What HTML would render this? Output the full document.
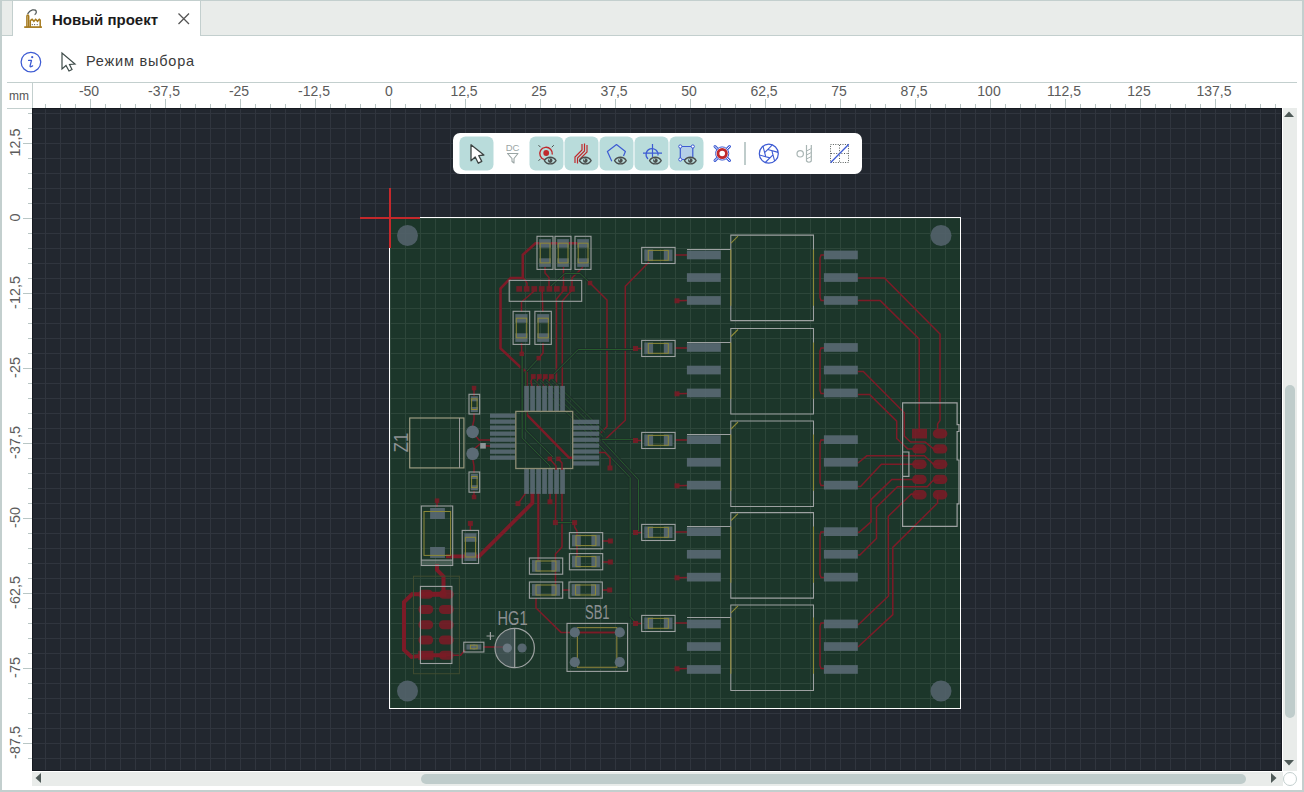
<!DOCTYPE html>
<html><head><meta charset="utf-8">
<style>
html,body{margin:0;padding:0;width:1304px;height:792px;overflow:hidden;background:#fff;font-family:"Liberation Sans",sans-serif;}
.abs{position:absolute;}
#frame{position:absolute;left:0;top:0;width:1304px;height:792px;}
</style></head><body>
<div id="frame">
<!-- outer borders -->
<div class="abs" style="left:0;top:0;width:2px;height:792px;background:#c3cfce"></div>
<div class="abs" style="left:0;top:0;width:1304px;height:1px;background:#c3cfce"></div>
<div class="abs" style="left:1302px;top:0;width:2px;height:792px;background:#c3cfce"></div>
<div class="abs" style="left:0;top:790px;width:1304px;height:2px;background:#c3cfce"></div>
<!-- tab bar -->
<div class="abs" style="left:2px;top:1px;width:1300px;height:34px;background:#e9ecea;border-bottom:1px solid #c3cfce"></div>
<div class="abs" style="left:12px;top:1px;width:187px;height:35px;background:#fff;border-left:1px solid #c3cfce;border-right:1px solid #c3cfce"></div>
<div class="abs" style="left:52px;top:11px;font-size:15px;font-weight:bold;color:#1b1b1b;white-space:nowrap">Новый проект</div>
<svg class="abs" style="left:0;top:0" width="220" height="36">
  <!-- factory icon -->
  <g fill="none" stroke="#a57a1e" stroke-width="1.5">
    <path d="M26.9 27 V16.2 Q26.9 15.1 27.8 15.1 Q28.7 15.1 28.7 16.2 V27"/>
    <path d="M30.3 27 V20.6 L32.1 19.3 L33.9 21.3 L35.7 19.3 L37.5 21.3 L39.3 19.3 L40.2 20.1 V27"/>
    <path d="M24.2 27.1 H41.9" stroke-width="1.7"/>
  </g>
  <path d="M27.6 13.8 Q29.5 10.6 32.5 9.9 Q36.3 9.3 36.3 12.2 Q36.1 14 34.6 14.6" fill="none" stroke="#505858" stroke-width="1.3"/>
  <g fill="#555"><circle cx="32.3" cy="24.6" r="0.6"/><circle cx="34.6" cy="24.6" r="0.6"/><circle cx="37.2" cy="24.6" r="0.6"/></g>
  <!-- close X -->
  <path d="M178.5 13.5 L189 24 M189 13.5 L178.5 24" stroke="#555" stroke-width="1.3"/>
</svg>
<!-- toolbar row -->
<svg class="abs" style="left:0;top:36px" width="90" height="46">
  <circle cx="30.9" cy="26.1" r="9.8" fill="none" stroke="#3d5bd3" stroke-width="1.25"/>
  <path d="M28.6 24.4 H31.5 L30.1 29.9 Q29.8 31 30.9 30.8 L32.6 29.9" fill="none" stroke="#3d5bd3" stroke-width="1.3" stroke-linejoin="round" stroke-linecap="round"/>
  <circle cx="32.2" cy="21.2" r="1.1" fill="#3d5bd3"/>
  <path d="M62 17 L62 33 L66 29.5 L69 35 L72 33.5 L69.5 28.5 L75 28 Z" fill="#fff" stroke="#3d4a48" stroke-width="1.2" stroke-linejoin="miter"/>
</svg>
<div class="abs" style="left:86px;top:53px;font-size:14.5px;letter-spacing:0.8px;color:#3a3a3a;white-space:nowrap">Режим выбора</div>
<div class="abs" style="left:7px;top:82px;width:1290px;height:1px;background:#c3cfce"></div>
<!-- ruler -->
<div id="rulers"><svg class="abs" style="left:0;top:0" width="1304" height="110">
<path d="M45.5 104 V108 M60.5 104 V108 M75.5 104 V108 M90.5 99 V108 M105.5 104 V108 M120.5 104 V108 M135.5 104 V108 M150.5 104 V108 M165.5 99 V108 M180.5 104 V108 M195.5 104 V108 M210.5 104 V108 M225.5 104 V108 M240.5 99 V108 M255.5 104 V108 M270.5 104 V108 M285.5 104 V108 M300.5 104 V108 M315.5 99 V108 M330.5 104 V108 M345.5 104 V108 M360.5 104 V108 M375.5 104 V108 M390.5 99 V108 M405.5 104 V108 M420.5 104 V108 M435.5 104 V108 M450.5 104 V108 M465.5 99 V108 M480.5 104 V108 M495.5 104 V108 M510.5 104 V108 M525.5 104 V108 M540.5 99 V108 M555.5 104 V108 M570.5 104 V108 M585.5 104 V108 M600.5 104 V108 M615.5 99 V108 M630.5 104 V108 M645.5 104 V108 M660.5 104 V108 M675.5 104 V108 M690.5 99 V108 M705.5 104 V108 M720.5 104 V108 M735.5 104 V108 M750.5 104 V108 M765.5 99 V108 M780.5 104 V108 M795.5 104 V108 M810.5 104 V108 M825.5 104 V108 M840.5 99 V108 M855.5 104 V108 M870.5 104 V108 M885.5 104 V108 M900.5 104 V108 M915.5 99 V108 M930.5 104 V108 M945.5 104 V108 M960.5 104 V108 M975.5 104 V108 M990.5 99 V108 M1005.5 104 V108 M1020.5 104 V108 M1035.5 104 V108 M1050.5 104 V108 M1065.5 99 V108 M1080.5 104 V108 M1095.5 104 V108 M1110.5 104 V108 M1125.5 104 V108 M1140.5 99 V108 M1155.5 104 V108 M1170.5 104 V108 M1185.5 104 V108 M1200.5 104 V108 M1215.5 99 V108 M1230.5 104 V108 M1245.5 104 V108 M1260.5 104 V108 M1275.5 104 V108" stroke="#b9c6c5" stroke-width="1"/>
<text x="89" y="96" text-anchor="middle" font-size="14" fill="#5b5b5b">-50</text>
<text x="164" y="96" text-anchor="middle" font-size="14" fill="#5b5b5b">-37,5</text>
<text x="239" y="96" text-anchor="middle" font-size="14" fill="#5b5b5b">-25</text>
<text x="314" y="96" text-anchor="middle" font-size="14" fill="#5b5b5b">-12,5</text>
<text x="389" y="96" text-anchor="middle" font-size="14" fill="#5b5b5b">0</text>
<text x="464" y="96" text-anchor="middle" font-size="14" fill="#5b5b5b">12,5</text>
<text x="539" y="96" text-anchor="middle" font-size="14" fill="#5b5b5b">25</text>
<text x="614" y="96" text-anchor="middle" font-size="14" fill="#5b5b5b">37,5</text>
<text x="689" y="96" text-anchor="middle" font-size="14" fill="#5b5b5b">50</text>
<text x="764" y="96" text-anchor="middle" font-size="14" fill="#5b5b5b">62,5</text>
<text x="839" y="96" text-anchor="middle" font-size="14" fill="#5b5b5b">75</text>
<text x="914" y="96" text-anchor="middle" font-size="14" fill="#5b5b5b">87,5</text>
<text x="989" y="96" text-anchor="middle" font-size="14" fill="#5b5b5b">100</text>
<text x="1064" y="96" text-anchor="middle" font-size="14" fill="#5b5b5b">112,5</text>
<text x="1139" y="96" text-anchor="middle" font-size="14" fill="#5b5b5b">125</text>
<text x="1214" y="96" text-anchor="middle" font-size="14" fill="#5b5b5b">137,5</text>
</svg>
<svg class="abs" style="left:0;top:108px" width="33" height="663">
<path d="M28 5.5 H32 M28 20.5 H32 M23 35.5 H32 M28 50.5 H32 M28 65.5 H32 M28 80.5 H32 M28 95.5 H32 M23 110.5 H32 M28 125.5 H32 M28 140.5 H32 M28 155.5 H32 M28 170.5 H32 M23 185.5 H32 M28 200.5 H32 M28 215.5 H32 M28 230.5 H32 M28 245.5 H32 M23 260.5 H32 M28 275.5 H32 M28 290.5 H32 M28 305.5 H32 M28 320.5 H32 M23 335.5 H32 M28 350.5 H32 M28 365.5 H32 M28 380.5 H32 M28 395.5 H32 M23 410.5 H32 M28 425.5 H32 M28 440.5 H32 M28 455.5 H32 M28 470.5 H32 M23 485.5 H32 M28 500.5 H32 M28 515.5 H32 M28 530.5 H32 M28 545.5 H32 M23 560.5 H32 M28 575.5 H32 M28 590.5 H32 M28 605.5 H32 M28 620.5 H32 M23 635.5 H32 M28 650.5 H32" stroke="#b9c6c5" stroke-width="1"/>
<text transform="translate(19.6 34.5) rotate(-90)" text-anchor="middle" font-size="14.4" fill="#5b5b5b">12,5</text>
<text transform="translate(19.6 109.5) rotate(-90)" text-anchor="middle" font-size="14.4" fill="#5b5b5b">0</text>
<text transform="translate(19.6 184.5) rotate(-90)" text-anchor="middle" font-size="14.4" fill="#5b5b5b">-12,5</text>
<text transform="translate(19.6 259.5) rotate(-90)" text-anchor="middle" font-size="14.4" fill="#5b5b5b">-25</text>
<text transform="translate(19.6 334.5) rotate(-90)" text-anchor="middle" font-size="14.4" fill="#5b5b5b">-37,5</text>
<text transform="translate(19.6 409.5) rotate(-90)" text-anchor="middle" font-size="14.4" fill="#5b5b5b">-50</text>
<text transform="translate(19.6 484.5) rotate(-90)" text-anchor="middle" font-size="14.4" fill="#5b5b5b">-62,5</text>
<text transform="translate(19.6 559.5) rotate(-90)" text-anchor="middle" font-size="14.4" fill="#5b5b5b">-75</text>
<text transform="translate(19.6 634.5) rotate(-90)" text-anchor="middle" font-size="14.4" fill="#5b5b5b">-87,5</text>
</svg></div>
<div class="abs" style="left:9px;top:89px;font-size:12px;color:#555">mm</div>
<div class="abs" style="left:32px;top:83px;width:1px;height:25px;background:#c3cfce"></div>
<div class="abs" style="left:7px;top:108px;width:25px;height:1px;background:#c3cfce"></div>
<!-- canvas -->
<svg class="abs" id="cv" style="left:0;top:0" width="1304" height="792">
  <defs>
    <pattern id="grid" x="45" y="113" width="15" height="15" patternUnits="userSpaceOnUse">
      <rect x="0" y="0" width="15" height="1" fill="#30353e"/>
      <rect x="0" y="0" width="1" height="15" fill="#30353e"/>
    </pattern>
    <pattern id="gridg" x="45" y="113" width="15" height="15" patternUnits="userSpaceOnUse">
      <rect x="0" y="0" width="15" height="1" fill="#2d463a"/>
      <rect x="0" y="0" width="1" height="15" fill="#2d463a"/>
    </pattern>
  </defs>
  <rect x="32" y="108" width="1250" height="663" fill="#22272f"/>
  <rect x="32" y="108" width="1250" height="663" fill="url(#grid)"/>
  <rect x="32" y="108" width="1250" height="1" fill="#151920"/>
  <rect x="32" y="108" width="1" height="663" fill="#151920"/>
  <rect x="1281" y="108" width="1" height="663" fill="#151920"/>
  <rect x="32" y="770" width="1250" height="1" fill="#151920"/>
  <!-- board -->
  <rect x="390" y="218" width="570" height="491" fill="#1c362a"/>
  <rect x="390" y="218" width="570" height="491" fill="url(#gridg)"/>
  <rect x="389.5" y="217.5" width="571" height="491" fill="none" stroke="#fff" stroke-width="1"/>
  <g fill="#56646e" fill-opacity="0.85">
    <circle cx="407.5" cy="235.5" r="10.5"/><circle cx="941" cy="235.5" r="10.5"/>
    <circle cx="407.5" cy="691" r="10.5"/><circle cx="941" cy="691" r="10.5"/>
  </g>
  <g id="pcb"><path d="M578.0 243.2 L535.5 243.2 L522.8 254.8 L522.8 278.0 L510.7 278.0 L500.5 288.6 L500.5 348.4 L526.5 372.8 L526.5 414.3 L569.1 457.8 L574.0 457.8" fill="none" stroke="#7c1b27" stroke-width="2.6" stroke-linejoin="miter"/>
<path d="M522.8 277.0 L527.0 283.0 L527.0 288.0" fill="none" stroke="#7c1b27" stroke-width="1.5" stroke-linejoin="miter"/>
<path d="M545.0 267.0 L545.0 273.0 L549.0 277.5 L549.0 288.0" fill="none" stroke="#7c1b27" stroke-width="1.5" stroke-linejoin="miter"/>
<path d="M563.5 267.0 L563.5 288.0" fill="none" stroke="#7c1b27" stroke-width="1.5" stroke-linejoin="miter"/>
<path d="M583.0 267.0 L572.0 278.0 L572.0 288.0" fill="none" stroke="#7c1b27" stroke-width="1.5" stroke-linejoin="miter"/>
<path d="M590.0 283.0 L607.0 300.0 L607.0 426.4 L599.8 434.0" fill="none" stroke="#7c1b27" stroke-width="1.5" stroke-linejoin="miter"/>
<path d="M534.2 291.0 L521.5 302.0 L521.5 312.0" fill="none" stroke="#7c1b27" stroke-width="1.5" stroke-linejoin="miter"/>
<path d="M542.2 290.0 L542.8 312.0" fill="none" stroke="#7c1b27" stroke-width="1.5" stroke-linejoin="miter"/>
<path d="M564.0 290.0 L556.5 299.0 L556.5 388.0" fill="none" stroke="#7c1b27" stroke-width="1.5" stroke-linejoin="miter"/>
<path d="M572.0 290.0 L562.3 301.0 L562.3 388.0" fill="none" stroke="#7c1b27" stroke-width="1.5" stroke-linejoin="miter"/>
<path d="M521.5 343.0 L521.8 353.9" fill="none" stroke="#7c1b27" stroke-width="1.5" stroke-linejoin="miter"/>
<path d="M543.0 343.0 L543.0 353.0 L538.8 358.2" fill="none" stroke="#7c1b27" stroke-width="1.5" stroke-linejoin="miter"/>
<path d="M649.0 262.0 L625.3 286.2 L625.3 420.2 L605.0 439.6 L599.0 439.6" fill="none" stroke="#7c1b27" stroke-width="1.5" stroke-linejoin="miter"/>
<path d="M533.3 376.5 L530.9 381.0 L532.4 388.0" fill="none" stroke="#7c1b27" stroke-width="1.5" stroke-linejoin="miter"/>
<path d="M539.3 376.5 L536.8 381.0 L538.3 388.0" fill="none" stroke="#7c1b27" stroke-width="1.5" stroke-linejoin="miter"/>
<path d="M545.3 376.5 L542.7 381.0 L544.2 388.0" fill="none" stroke="#7c1b27" stroke-width="1.5" stroke-linejoin="miter"/>
<path d="M551.4 376.5 L548.6 381.0 L550.1 388.0" fill="none" stroke="#7c1b27" stroke-width="1.5" stroke-linejoin="miter"/>
<path d="M474.0 388.0 L474.0 396.0" fill="none" stroke="#7c1b27" stroke-width="1.5" stroke-linejoin="miter"/>
<path d="M474.0 413.0 L474.0 420.0 L472.6 426.0" fill="none" stroke="#7c1b27" stroke-width="1.5" stroke-linejoin="miter"/>
<path d="M472.6 432.0 L479.0 440.0 L491.0 440.0" fill="none" stroke="#7c1b27" stroke-width="1.5" stroke-linejoin="miter"/>
<path d="M483.0 445.8 L491.0 445.9" fill="none" stroke="#7c1b27" stroke-width="1.5" stroke-linejoin="miter"/>
<path d="M474.0 449.0 L480.0 444.0" fill="none" stroke="#7c1b27" stroke-width="1.5" stroke-linejoin="miter"/>
<path d="M472.6 458.0 L474.0 466.0 L474.0 473.0" fill="none" stroke="#7c1b27" stroke-width="1.5" stroke-linejoin="miter"/>
<path d="M474.0 491.0 L474.0 497.0" fill="none" stroke="#7c1b27" stroke-width="1.5" stroke-linejoin="miter"/>
<path d="M532.4 492.0 L532.4 503.0 L479.0 556.3 L446.0 556.3" fill="none" stroke="#7c1b27" stroke-width="3.8" stroke-linejoin="miter"/>
<path d="M526.5 492.0 L518.0 503.6" fill="none" stroke="#7c1b27" stroke-width="1.5" stroke-linejoin="miter"/>
<path d="M538.3 492.0 L538.3 560.0" fill="none" stroke="#7c1b27" stroke-width="2.2" stroke-linejoin="miter"/>
<path d="M550.1 492.0 L550.0 501.8" fill="none" stroke="#7c1b27" stroke-width="1.5" stroke-linejoin="miter"/>
<path d="M556.0 492.0 L555.4 522.6" fill="none" stroke="#7c1b27" stroke-width="1.5" stroke-linejoin="miter"/>
<path d="M562.0 492.0 L562.0 547.0 L555.5 554.0 L555.5 590.0" fill="none" stroke="#7c1b27" stroke-width="1.5" stroke-linejoin="miter"/>
<path d="M574.6 522.6 L574.6 527.0 L577.0 531.0 L577.0 556.0" fill="none" stroke="#7c1b27" stroke-width="1.5" stroke-linejoin="miter"/>
<path d="M602.0 541.0 L610.4 541.0" fill="none" stroke="#7c1b27" stroke-width="1.5" stroke-linejoin="miter"/>
<path d="M602.0 562.0 L610.4 562.0" fill="none" stroke="#7c1b27" stroke-width="1.5" stroke-linejoin="miter"/>
<path d="M602.0 590.0 L609.7 590.0" fill="none" stroke="#7c1b27" stroke-width="1.5" stroke-linejoin="miter"/>
<path d="M562.0 590.0 L570.0 590.0" fill="none" stroke="#7c1b27" stroke-width="1.5" stroke-linejoin="miter"/>
<path d="M437.0 500.7 L437.0 507.0" fill="none" stroke="#7c1b27" stroke-width="1.5" stroke-linejoin="miter"/>
<path d="M470.4 523.4 L470.4 531.0" fill="none" stroke="#7c1b27" stroke-width="1.5" stroke-linejoin="miter"/>
<path d="M437.0 564.0 L437.0 570.0 L443.5 576.5 L443.5 594.3" fill="none" stroke="#7c1b27" stroke-width="4.0" stroke-linejoin="miter"/>
<path d="M425.8 594.3 L412.0 594.3 L404.0 602.0 L404.0 650.0 L411.5 657.0 L425.8 655.3" fill="none" stroke="#7c1b27" stroke-width="4.0" stroke-linejoin="miter"/>
<path d="M425.8 594.3 L446.3 594.3" fill="none" stroke="#7c1b27" stroke-width="5.0" stroke-linejoin="miter"/>
<path d="M425.8 655.3 L446.3 655.3" fill="none" stroke="#7c1b27" stroke-width="4.0" stroke-linejoin="miter"/>
<path d="M446.3 655.3 L460.6 655.3 L465.0 650.0" fill="none" stroke="#7c1b27" stroke-width="1.5" stroke-linejoin="miter"/>
<path d="M483.0 647.0 L503.0 647.0" fill="none" stroke="#7c1b27" stroke-width="1.5" stroke-linejoin="miter"/>
<path d="M536.0 598.0 L536.0 608.0 L561.0 632.4 L620.0 632.4" fill="none" stroke="#7c1b27" stroke-width="1.5" stroke-linejoin="miter"/>
<path d="M675.0 255.0 L687.0 255.0" fill="none" stroke="#7c1b27" stroke-width="1.5" stroke-linejoin="miter"/>
<path d="M677.0 300.8 L687.0 300.5" fill="none" stroke="#7c1b27" stroke-width="1.5" stroke-linejoin="miter"/>
<path d="M824.0 254.9 L821.0 254.9 L820.0 258.0 L820.0 297.5 L821.0 300.5 L824.0 300.5" fill="none" stroke="#7c1b27" stroke-width="1.5" stroke-linejoin="miter"/>
<path d="M675.0 348.0 L687.0 348.0" fill="none" stroke="#7c1b27" stroke-width="1.5" stroke-linejoin="miter"/>
<path d="M677.0 393.8 L687.0 393.5" fill="none" stroke="#7c1b27" stroke-width="1.5" stroke-linejoin="miter"/>
<path d="M635.5 348.5 L642.0 348.5" fill="none" stroke="#7c1b27" stroke-width="1.5" stroke-linejoin="miter"/>
<path d="M824.0 347.9 L821.0 347.9 L820.0 351.0 L820.0 390.5 L821.0 393.5 L824.0 393.5" fill="none" stroke="#7c1b27" stroke-width="1.5" stroke-linejoin="miter"/>
<path d="M675.0 440.0 L687.0 440.0" fill="none" stroke="#7c1b27" stroke-width="1.5" stroke-linejoin="miter"/>
<path d="M677.0 485.8 L687.0 485.5" fill="none" stroke="#7c1b27" stroke-width="1.5" stroke-linejoin="miter"/>
<path d="M635.5 440.5 L642.0 440.5" fill="none" stroke="#7c1b27" stroke-width="1.5" stroke-linejoin="miter"/>
<path d="M824.0 439.9 L821.0 439.9 L820.0 443.0 L820.0 482.5 L821.0 485.5 L824.0 485.5" fill="none" stroke="#7c1b27" stroke-width="1.5" stroke-linejoin="miter"/>
<path d="M675.0 532.0 L687.0 532.0" fill="none" stroke="#7c1b27" stroke-width="1.5" stroke-linejoin="miter"/>
<path d="M677.0 577.8 L687.0 577.5" fill="none" stroke="#7c1b27" stroke-width="1.5" stroke-linejoin="miter"/>
<path d="M635.5 532.5 L642.0 532.5" fill="none" stroke="#7c1b27" stroke-width="1.5" stroke-linejoin="miter"/>
<path d="M824.0 531.9 L821.0 531.9 L820.0 535.0 L820.0 574.5 L821.0 577.5 L824.0 577.5" fill="none" stroke="#7c1b27" stroke-width="1.5" stroke-linejoin="miter"/>
<path d="M675.0 623.0 L687.0 623.0" fill="none" stroke="#7c1b27" stroke-width="1.5" stroke-linejoin="miter"/>
<path d="M677.0 668.8 L687.0 668.5" fill="none" stroke="#7c1b27" stroke-width="1.5" stroke-linejoin="miter"/>
<path d="M635.5 623.5 L642.0 623.5" fill="none" stroke="#7c1b27" stroke-width="1.5" stroke-linejoin="miter"/>
<path d="M824.0 622.9 L821.0 622.9 L820.0 626.0 L820.0 665.5 L821.0 668.5 L824.0 668.5" fill="none" stroke="#7c1b27" stroke-width="1.5" stroke-linejoin="miter"/>
<path d="M858.0 278.0 L884.4 278.0 L940.0 334.0 L940.0 420.4 L937.6 423.9 L937.6 430.0" fill="none" stroke="#7c1b27" stroke-width="1.5" stroke-linejoin="miter"/>
<path d="M858.0 300.6 L880.3 300.6 L919.2 339.0 L919.2 432.0" fill="none" stroke="#7c1b27" stroke-width="1.5" stroke-linejoin="miter"/>
<path d="M858.0 371.4 L863.3 371.4 L904.3 412.8 L904.3 436.1 L910.6 442.0 L925.1 442.0 L933.5 448.9 L940.0 448.7" fill="none" stroke="#7c1b27" stroke-width="1.5" stroke-linejoin="miter"/>
<path d="M858.0 394.4 L869.6 394.4 L896.7 421.1 L896.7 438.5 L907.8 448.9 L919.3 448.7" fill="none" stroke="#7c1b27" stroke-width="1.5" stroke-linejoin="miter"/>
<path d="M858.0 463.0 L866.8 455.8 L924.4 455.8 L933.5 464.2 L940.0 463.9" fill="none" stroke="#7c1b27" stroke-width="1.5" stroke-linejoin="miter"/>
<path d="M858.0 486.4 L860.6 486.4 L881.4 464.2 L919.3 464.2" fill="none" stroke="#7c1b27" stroke-width="1.5" stroke-linejoin="miter"/>
<path d="M858.0 532.2 L859.2 532.2 L871.0 521.8 L871.0 499.6 L891.8 479.4 L919.3 479.4" fill="none" stroke="#7c1b27" stroke-width="1.5" stroke-linejoin="miter"/>
<path d="M858.0 555.1 L859.9 555.1 L876.5 538.5 L876.5 507.2 L897.4 486.7 L927.2 486.7 L932.8 480.8 L940.0 479.4" fill="none" stroke="#7c1b27" stroke-width="1.5" stroke-linejoin="miter"/>
<path d="M858.0 625.0 L888.5 596.0 L888.3 516.3 L911.3 494.0 L919.3 494.5" fill="none" stroke="#7c1b27" stroke-width="1.5" stroke-linejoin="miter"/>
<path d="M858.0 647.0 L892.8 614.6 L892.8 547.4 L937.6 503.0 L937.6 494.5" fill="none" stroke="#7c1b27" stroke-width="1.5" stroke-linejoin="miter"/>
<path d="M599.5 437.5 L638.5 479.8 V532 L630.2 532 V477.6 L599.5 445 Z" fill="#24302f" fill-opacity="0.55"/>
<path d="M599.0 437.0 L638.5 479.8 L638.5 531.0" fill="none" stroke="#1d2a2a" stroke-opacity="0.7" stroke-width="3"/>
<path d="M599.0 437.0 L638.5 479.8 L638.5 531.0" fill="none" stroke="#275d2d" stroke-width="1.0" stroke-linejoin="miter"/>
<path d="M599.0 445.0 L630.2 477.6 L630.2 616.6 L635.4 622.4" fill="none" stroke="#1d2a2a" stroke-opacity="0.7" stroke-width="3"/>
<path d="M599.0 445.0 L630.2 477.6 L630.2 616.6 L635.4 622.4" fill="none" stroke="#275d2d" stroke-width="1.0" stroke-linejoin="miter"/>
<path d="M551.0 286.0 L565.0 273.5 L580.0 273.5 L590.0 283.0" fill="none" stroke="#1d2a2a" stroke-opacity="0.7" stroke-width="3"/>
<path d="M551.0 286.0 L565.0 273.5 L580.0 273.5 L590.0 283.0" fill="none" stroke="#275d2d" stroke-width="1.0" stroke-linejoin="miter"/>
<path d="M521.8 354.0 L521.8 420.0" fill="none" stroke="#1d2a2a" stroke-opacity="0.7" stroke-width="3"/>
<path d="M521.8 354.0 L521.8 420.0" fill="none" stroke="#275d2d" stroke-width="1.0" stroke-linejoin="miter"/>
<path d="M538.8 358.2 L527.0 371.0" fill="none" stroke="#1d2a2a" stroke-opacity="0.7" stroke-width="3"/>
<path d="M538.8 358.2 L527.0 371.0" fill="none" stroke="#275d2d" stroke-width="1.0" stroke-linejoin="miter"/>
<path d="M635.7 439.4 L600.0 439.4" fill="none" stroke="#1d2a2a" stroke-opacity="0.7" stroke-width="3"/>
<path d="M635.7 439.4 L600.0 439.4" fill="none" stroke="#275d2d" stroke-width="1.0" stroke-linejoin="miter"/>
<path d="M555.4 522.6 L574.6 522.6" fill="none" stroke="#1d2a2a" stroke-opacity="0.7" stroke-width="3"/>
<path d="M555.4 522.6 L574.6 522.6" fill="none" stroke="#275d2d" stroke-width="1.0" stroke-linejoin="miter"/>
<path d="M635.1 349.5 L578.2 349.5 L553.5 374.3" fill="none" stroke="#1d2a2a" stroke-opacity="0.7" stroke-width="3"/>
<path d="M635.1 349.5 L578.2 349.5 L553.5 374.3" fill="none" stroke="#275d2d" stroke-width="1.0" stroke-linejoin="miter"/>
<path d="M522.2 354.0 L522.2 438.0 L550.0 466.0 L550.0 472.0" fill="none" stroke="#1d2a2a" stroke-opacity="0.7" stroke-width="3"/>
<path d="M522.2 354.0 L522.2 438.0 L550.0 466.0 L550.0 472.0" fill="none" stroke="#275d2d" stroke-width="1.0" stroke-linejoin="miter"/>
<path d="M525.7 371.0 L525.7 430.0 L553.0 457.0" fill="none" stroke="#1d2a2a" stroke-opacity="0.7" stroke-width="3"/>
<path d="M525.7 371.0 L525.7 430.0 L553.0 457.0" fill="none" stroke="#275d2d" stroke-width="1.0" stroke-linejoin="miter"/>
<path d="M533.4 379.0 L599.0 444.6" fill="none" stroke="#1d2a2a" stroke-opacity="0.7" stroke-width="3"/>
<path d="M533.4 379.0 L599.0 444.6" fill="none" stroke="#275d2d" stroke-width="0.9" stroke-linejoin="miter"/>
<path d="M539.4 379.0 L601.0 440.6" fill="none" stroke="#1d2a2a" stroke-opacity="0.7" stroke-width="3"/>
<path d="M539.4 379.0 L601.0 440.6" fill="none" stroke="#275d2d" stroke-width="0.9" stroke-linejoin="miter"/>
<path d="M545.4 379.0 L603.0 436.6" fill="none" stroke="#1d2a2a" stroke-opacity="0.7" stroke-width="3"/>
<path d="M545.4 379.0 L603.0 436.6" fill="none" stroke="#275d2d" stroke-width="0.9" stroke-linejoin="miter"/>
<path d="M551.4 379.0 L605.0 432.6" fill="none" stroke="#1d2a2a" stroke-opacity="0.7" stroke-width="3"/>
<path d="M551.4 379.0 L605.0 432.6" fill="none" stroke="#275d2d" stroke-width="0.9" stroke-linejoin="miter"/>
<rect x="539.2" y="239.1" width="11.7" height="8.6" fill="#5b6b75" fill-opacity="0.88"/>
<rect x="539.2" y="258.3" width="11.7" height="8.6" fill="#5b6b75" fill-opacity="0.88"/>
<rect x="540.2" y="243.2" width="9.8" height="19.7" fill="none" stroke="#8c8838" stroke-width="1.0"/>
<rect x="537.0" y="236.3" width="16.0" height="33.1" fill="none" stroke="#9da1a1" stroke-width="1.1"/>
<rect x="557.2" y="239.1" width="11.7" height="8.6" fill="#5b6b75" fill-opacity="0.88"/>
<rect x="557.2" y="258.3" width="11.7" height="8.6" fill="#5b6b75" fill-opacity="0.88"/>
<rect x="558.2" y="243.2" width="9.8" height="19.7" fill="none" stroke="#8c8838" stroke-width="1.0"/>
<rect x="555.0" y="236.3" width="16.0" height="33.1" fill="none" stroke="#9da1a1" stroke-width="1.1"/>
<rect x="577.2" y="239.1" width="11.7" height="8.6" fill="#5b6b75" fill-opacity="0.88"/>
<rect x="577.2" y="258.3" width="11.7" height="8.6" fill="#5b6b75" fill-opacity="0.88"/>
<rect x="578.2" y="243.2" width="9.8" height="19.7" fill="none" stroke="#8c8838" stroke-width="1.0"/>
<rect x="575.0" y="236.3" width="16.0" height="33.1" fill="none" stroke="#9da1a1" stroke-width="1.1"/>
<rect x="509.2" y="280.4" width="72.5" height="20.9" fill="none" stroke="#9da1a1" stroke-width="1.1"/>
<rect x="516.3" y="286.1" width="5.7" height="5.6" fill="#7a1b26" fill-opacity="0.88"/>
<rect x="523.8" y="286.1" width="5.7" height="5.6" fill="#7a1b26" fill-opacity="0.88"/>
<rect x="531.4" y="286.1" width="5.7" height="5.6" fill="#7a1b26" fill-opacity="0.88"/>
<rect x="538.9" y="286.1" width="5.7" height="5.6" fill="#7a1b26" fill-opacity="0.88"/>
<rect x="546.5" y="286.1" width="5.7" height="5.6" fill="#7a1b26" fill-opacity="0.88"/>
<rect x="554.0" y="286.1" width="5.7" height="5.6" fill="#7a1b26" fill-opacity="0.88"/>
<rect x="561.6" y="286.1" width="5.7" height="5.6" fill="#7a1b26" fill-opacity="0.88"/>
<rect x="569.1" y="286.1" width="5.7" height="5.6" fill="#7a1b26" fill-opacity="0.88"/>
<rect x="587.8" y="280.8" width="4.5" height="4.5" fill="#7a1b26" fill-opacity="0.88"/>
<rect x="515.3" y="314.1" width="12.3" height="8.6" fill="#5b6b75" fill-opacity="0.88"/>
<rect x="515.3" y="333.3" width="12.3" height="8.6" fill="#5b6b75" fill-opacity="0.88"/>
<rect x="516.3" y="318.2" width="10.4" height="19.7" fill="none" stroke="#8c8838" stroke-width="1.0"/>
<rect x="513.1" y="311.3" width="16.6" height="33.1" fill="none" stroke="#9da1a1" stroke-width="1.1"/>
<rect x="537.1" y="314.1" width="12.1" height="8.6" fill="#5b6b75" fill-opacity="0.88"/>
<rect x="537.1" y="333.3" width="12.1" height="8.6" fill="#5b6b75" fill-opacity="0.88"/>
<rect x="538.1" y="318.2" width="10.2" height="19.7" fill="none" stroke="#8c8838" stroke-width="1.0"/>
<rect x="534.9" y="311.3" width="16.4" height="33.1" fill="none" stroke="#9da1a1" stroke-width="1.1"/>
<rect x="519.5" y="351.6" width="4.5" height="4.5" fill="#7a1b26" fill-opacity="0.88"/>
<rect x="536.5" y="355.9" width="4.5" height="4.5" fill="#7a1b26" fill-opacity="0.88"/>
<rect x="530.9" y="374.1" width="4.8" height="4.8" fill="#7a1b26" fill-opacity="0.88"/>
<rect x="536.9" y="374.1" width="4.8" height="4.8" fill="#7a1b26" fill-opacity="0.88"/>
<rect x="542.9" y="374.1" width="4.8" height="4.8" fill="#7a1b26" fill-opacity="0.88"/>
<rect x="549.0" y="374.1" width="4.8" height="4.8" fill="#7a1b26" fill-opacity="0.88"/>
<rect x="524.2" y="385.9" width="4.7" height="25.1" fill="#5b6b75" fill-opacity="0.88"/>
<rect x="524.2" y="469.0" width="4.7" height="24.9" fill="#5b6b75" fill-opacity="0.88"/>
<rect x="530.2" y="385.9" width="4.7" height="25.1" fill="#5b6b75" fill-opacity="0.88"/>
<rect x="530.2" y="469.0" width="4.7" height="24.9" fill="#5b6b75" fill-opacity="0.88"/>
<rect x="536.2" y="385.9" width="4.7" height="25.1" fill="#5b6b75" fill-opacity="0.88"/>
<rect x="536.2" y="469.0" width="4.7" height="24.9" fill="#5b6b75" fill-opacity="0.88"/>
<rect x="542.2" y="385.9" width="4.7" height="25.1" fill="#5b6b75" fill-opacity="0.88"/>
<rect x="542.2" y="469.0" width="4.7" height="24.9" fill="#5b6b75" fill-opacity="0.88"/>
<rect x="548.2" y="385.9" width="4.7" height="25.1" fill="#5b6b75" fill-opacity="0.88"/>
<rect x="548.2" y="469.0" width="4.7" height="24.9" fill="#5b6b75" fill-opacity="0.88"/>
<rect x="554.2" y="385.9" width="4.7" height="25.1" fill="#5b6b75" fill-opacity="0.88"/>
<rect x="554.2" y="469.0" width="4.7" height="24.9" fill="#5b6b75" fill-opacity="0.88"/>
<rect x="560.2" y="385.9" width="4.7" height="25.1" fill="#5b6b75" fill-opacity="0.88"/>
<rect x="560.2" y="469.0" width="4.7" height="24.9" fill="#5b6b75" fill-opacity="0.88"/>
<rect x="490.0" y="413.5" width="25.0" height="4.3" fill="#5b6b75" fill-opacity="0.88"/>
<rect x="572.9" y="419.7" width="26.3" height="4.3" fill="#5b6b75" fill-opacity="0.88"/>
<rect x="490.0" y="419.5" width="25.0" height="4.3" fill="#5b6b75" fill-opacity="0.88"/>
<rect x="572.9" y="425.6" width="26.3" height="4.3" fill="#5b6b75" fill-opacity="0.88"/>
<rect x="490.0" y="425.5" width="25.0" height="4.3" fill="#5b6b75" fill-opacity="0.88"/>
<rect x="572.9" y="431.6" width="26.3" height="4.3" fill="#5b6b75" fill-opacity="0.88"/>
<rect x="490.0" y="431.5" width="25.0" height="4.3" fill="#5b6b75" fill-opacity="0.88"/>
<rect x="572.9" y="437.6" width="26.3" height="4.3" fill="#5b6b75" fill-opacity="0.88"/>
<rect x="490.0" y="437.5" width="25.0" height="4.3" fill="#5b6b75" fill-opacity="0.88"/>
<rect x="572.9" y="443.5" width="26.3" height="4.3" fill="#5b6b75" fill-opacity="0.88"/>
<rect x="490.0" y="443.5" width="25.0" height="4.3" fill="#5b6b75" fill-opacity="0.88"/>
<rect x="572.9" y="449.4" width="26.3" height="4.3" fill="#5b6b75" fill-opacity="0.88"/>
<rect x="490.0" y="449.5" width="25.0" height="4.3" fill="#5b6b75" fill-opacity="0.88"/>
<rect x="572.9" y="455.4" width="26.3" height="4.3" fill="#5b6b75" fill-opacity="0.88"/>
<rect x="490.0" y="455.5" width="25.0" height="4.3" fill="#5b6b75" fill-opacity="0.88"/>
<rect x="572.9" y="461.3" width="26.3" height="4.3" fill="#5b6b75" fill-opacity="0.88"/>
<rect x="515.8" y="411.4" width="56.9" height="57.1" fill="none" stroke="#8e8d74" stroke-width="1.3"/>
<rect x="547.6" y="456.6" width="4.5" height="4.5" fill="#7a1b26" fill-opacity="0.88"/>
<rect x="556.2" y="456.6" width="4.5" height="4.5" fill="#7a1b26" fill-opacity="0.88"/>
<path d="M549.9 459.0 L556.0 466.0 L556.0 470.0" fill="none" stroke="#7c1b27" stroke-width="1.5" stroke-linejoin="miter"/>
<path d="M558.5 459.0 L562.0 463.0 L562.0 470.0" fill="none" stroke="#7c1b27" stroke-width="1.5" stroke-linejoin="miter"/>
<rect x="607.5" y="465.5" width="5.0" height="5.0" fill="#7a1b26" fill-opacity="0.88"/>
<path d="M599.0 452.5 L605.0 452.5 L610.0 458.0 L610.0 466.0" fill="none" stroke="#7c1b27" stroke-width="1.5" stroke-linejoin="miter"/>
<rect x="471.8" y="385.8" width="4.5" height="4.5" fill="#7a1b26" fill-opacity="0.88"/>
<rect x="470.8" y="396.3" width="7.1" height="5.0" fill="#5b6b75" fill-opacity="0.88"/>
<rect x="470.8" y="407.0" width="7.1" height="5.0" fill="#5b6b75" fill-opacity="0.88"/>
<rect x="471.6" y="398.8" width="5.5" height="10.7" fill="none" stroke="#8c8838" stroke-width="1.0"/>
<rect x="469.0" y="394.3" width="10.7" height="19.7" fill="none" stroke="#9da1a1" stroke-width="1.1"/>
<circle cx="472.6" cy="431.9" r="6.3" fill="#5b6b75"/>
<circle cx="472.6" cy="453.7" r="6.3" fill="#5b6b75"/>
<rect x="480.2" y="443.0" width="5.6" height="5.6" fill="#8c9597"/>
<rect x="470.8" y="474.0" width="7.1" height="5.0" fill="#5b6b75" fill-opacity="0.88"/>
<rect x="470.8" y="485.2" width="7.1" height="5.0" fill="#5b6b75" fill-opacity="0.88"/>
<rect x="471.6" y="476.5" width="5.5" height="11.2" fill="none" stroke="#8c8838" stroke-width="1.0"/>
<rect x="469.0" y="472.0" width="10.7" height="20.2" fill="none" stroke="#9da1a1" stroke-width="1.1"/>
<rect x="471.8" y="494.8" width="4.5" height="4.5" fill="#7a1b26" fill-opacity="0.88"/>
<rect x="409.7" y="418.0" width="54.2" height="49.9" fill="none" stroke="#9a9a80" stroke-width="1.2"/>
<path d="M459.5 418 V467.9" stroke="#9a9a9a" stroke-width="1"/>
<text x="408.5" y="442.4" font-size="20.0" fill="#8c9092" text-anchor="middle" textLength="19.5" lengthAdjust="spacingAndGlyphs" transform="rotate(-90 408.5 442.4)">Z1</text>
<rect x="430.1" y="508.0" width="14.8" height="11.0" fill="#5b6b75" fill-opacity="0.88"/>
<rect x="430.1" y="547.0" width="14.8" height="10.9" fill="#5b6b75" fill-opacity="0.88"/>
<rect x="424.0" y="511.5" width="26.6" height="43.9" fill="none" stroke="#8c8838" stroke-width="1.0"/>
<rect x="421.3" y="506.0" width="31.4" height="59.5" fill="none" stroke="#9da1a1" stroke-width="1.1"/>
<rect x="421.8" y="560.3" width="30.4" height="4.7" fill="#8a9a94" fill-opacity="0.35"/>
<path d="M421.3 560.1 H452.7" stroke="#9da1a1" stroke-width="1.1"/>
<rect x="434.8" y="498.4" width="4.5" height="4.5" fill="#7a1b26" fill-opacity="0.88"/>
<rect x="467.9" y="520.9" width="5.0" height="5.0" fill="#7a1b26" fill-opacity="0.88"/>
<rect x="464.4" y="533.2" width="12.1" height="8.6" fill="#5b6b75" fill-opacity="0.88"/>
<rect x="464.4" y="552.4" width="12.1" height="8.6" fill="#5b6b75" fill-opacity="0.88"/>
<rect x="465.4" y="537.3" width="10.2" height="19.7" fill="none" stroke="#8c8838" stroke-width="1.0"/>
<rect x="462.2" y="530.4" width="16.4" height="33.1" fill="none" stroke="#9da1a1" stroke-width="1.1"/>
<rect x="515.5" y="501.1" width="5.0" height="5.0" fill="#7a1b26" fill-opacity="0.88"/>
<rect x="547.5" y="499.3" width="5.0" height="5.0" fill="#7a1b26" fill-opacity="0.88"/>
<rect x="552.9" y="520.1" width="5.0" height="5.0" fill="#7a1b26" fill-opacity="0.88"/>
<rect x="572.1" y="520.1" width="5.0" height="5.0" fill="#7a1b26" fill-opacity="0.88"/>
<rect x="572.0" y="534.7" width="8.8" height="11.7" fill="#5b6b75" fill-opacity="0.88"/>
<rect x="591.4" y="534.7" width="8.7" height="11.7" fill="#5b6b75" fill-opacity="0.88"/>
<rect x="576.0" y="535.6" width="19.9" height="10.0" fill="none" stroke="#8c8838" stroke-width="1.0"/>
<rect x="569.4" y="532.6" width="33.3" height="16.2" fill="none" stroke="#9da1a1" stroke-width="1.1"/>
<rect x="572.0" y="555.7" width="8.8" height="11.7" fill="#5b6b75" fill-opacity="0.88"/>
<rect x="591.4" y="555.7" width="8.7" height="11.7" fill="#5b6b75" fill-opacity="0.88"/>
<rect x="576.0" y="556.6" width="19.9" height="10.0" fill="none" stroke="#8c8838" stroke-width="1.0"/>
<rect x="569.4" y="553.6" width="33.3" height="16.2" fill="none" stroke="#9da1a1" stroke-width="1.1"/>
<rect x="532.0" y="560.1" width="8.8" height="11.7" fill="#5b6b75" fill-opacity="0.88"/>
<rect x="551.4" y="560.1" width="8.7" height="11.7" fill="#5b6b75" fill-opacity="0.88"/>
<rect x="536.0" y="561.0" width="19.9" height="10.0" fill="none" stroke="#8c8838" stroke-width="1.0"/>
<rect x="529.4" y="558.0" width="33.3" height="16.2" fill="none" stroke="#9da1a1" stroke-width="1.1"/>
<rect x="532.0" y="584.1" width="8.8" height="11.7" fill="#5b6b75" fill-opacity="0.88"/>
<rect x="551.4" y="584.1" width="8.7" height="11.7" fill="#5b6b75" fill-opacity="0.88"/>
<rect x="536.0" y="585.0" width="19.9" height="10.0" fill="none" stroke="#8c8838" stroke-width="1.0"/>
<rect x="529.4" y="582.0" width="33.3" height="16.2" fill="none" stroke="#9da1a1" stroke-width="1.1"/>
<rect x="571.6" y="584.1" width="8.8" height="11.7" fill="#5b6b75" fill-opacity="0.88"/>
<rect x="591.0" y="584.1" width="8.7" height="11.7" fill="#5b6b75" fill-opacity="0.88"/>
<rect x="575.6" y="585.0" width="19.9" height="10.0" fill="none" stroke="#8c8838" stroke-width="1.0"/>
<rect x="569.0" y="582.0" width="33.3" height="16.2" fill="none" stroke="#9da1a1" stroke-width="1.1"/>
<rect x="607.9" y="538.5" width="5.0" height="5.0" fill="#7a1b26" fill-opacity="0.88"/>
<rect x="607.9" y="559.5" width="5.0" height="5.0" fill="#7a1b26" fill-opacity="0.88"/>
<rect x="607.2" y="587.5" width="5.0" height="5.0" fill="#7a1b26" fill-opacity="0.88"/>
<rect x="413.5" y="576.2" width="45.9" height="97.5" fill="none" stroke="#3f4b30" stroke-width="1.0"/>
<rect x="418.4" y="589.8" width="14.8" height="9.0" rx="4.5" fill="#7a1b26" fill-opacity="0.88"/>
<rect x="438.9" y="589.8" width="14.8" height="9.0" rx="4.5" fill="#7a1b26" fill-opacity="0.88"/>
<rect x="418.4" y="605.0" width="14.8" height="9.0" rx="4.5" fill="#7a1b26" fill-opacity="0.88"/>
<rect x="438.9" y="605.0" width="14.8" height="9.0" rx="4.5" fill="#7a1b26" fill-opacity="0.88"/>
<rect x="418.4" y="620.3" width="14.8" height="9.0" rx="4.5" fill="#7a1b26" fill-opacity="0.88"/>
<rect x="438.9" y="620.3" width="14.8" height="9.0" rx="4.5" fill="#7a1b26" fill-opacity="0.88"/>
<rect x="418.4" y="635.5" width="14.8" height="9.0" rx="4.5" fill="#7a1b26" fill-opacity="0.88"/>
<rect x="438.9" y="635.5" width="14.8" height="9.0" rx="4.5" fill="#7a1b26" fill-opacity="0.88"/>
<rect x="418.2" y="650.8" width="15.3" height="9.0" fill="#7a1b26" fill-opacity="0.88"/>
<rect x="438.9" y="650.8" width="14.8" height="9.0" rx="4.5" fill="#7a1b26" fill-opacity="0.88"/>
<rect x="420.4" y="586.4" width="31.5" height="77.1" fill="none" stroke="#9da1a1" stroke-width="1.1"/>
<rect x="466.4" y="644.3" width="8.8" height="5.3" fill="#5b6b75" fill-opacity="0.88"/>
<rect x="472.6" y="644.3" width="8.7" height="5.3" fill="#5b6b75" fill-opacity="0.88"/>
<rect x="470.4" y="645.2" width="6.7" height="3.6" fill="none" stroke="#8c8838" stroke-width="1.0"/>
<rect x="463.8" y="642.2" width="20.1" height="9.8" fill="none" stroke="#9da1a1" stroke-width="1.1"/>
<path d="M514.7 628.3 A19.7 19.7 0 0 0 514.7 667.7 Z" fill="#55636a" fill-opacity="0.6"/>
<circle cx="514.7" cy="648" r="19.7" fill="none" stroke="#9da1a1" stroke-width="1.2"/>
<path d="M514.7 628.3 V667.7" stroke="#9da1a1" stroke-width="1.2"/>
<circle cx="507.3" cy="648.0" r="4.6" fill="#6a7881"/>
<circle cx="522.1" cy="648.0" r="4.6" fill="#56666f"/>
<path d="M486.5 636 H494.3 M490.4 632.1 V639.9" stroke="#9da1a1" stroke-width="1.2"/>
<text x="497.5" y="624.5" font-size="19.5" fill="#8c9092" text-anchor="start" textLength="30.0" lengthAdjust="spacingAndGlyphs">HG1</text>
<rect x="577.4" y="627.6" width="39.4" height="39.7" fill="none" stroke="#807b38" stroke-width="1.2"/>
<path d="M575.0 632.4 L620.0 632.4" fill="none" stroke="#7c1b27" stroke-width="1.5" stroke-linejoin="miter"/>
<circle cx="574.8" cy="632.4" r="5.1" fill="#5b6b75"/>
<circle cx="619.8" cy="632.4" r="5.1" fill="#5b6b75"/>
<circle cx="574.8" cy="662.2" r="5.1" fill="#5b6b75"/>
<circle cx="619.8" cy="662.2" r="5.1" fill="#5b6b75"/>
<rect x="567.0" y="623.4" width="60.6" height="48.0" fill="none" stroke="#9da1a1" stroke-width="1.1"/>
<text x="585.0" y="619.0" font-size="19.5" fill="#8c9092" text-anchor="start" textLength="24.6" lengthAdjust="spacingAndGlyphs">SB1</text>
<rect x="644.3" y="249.5" width="8.8" height="11.6" fill="#5b6b75" fill-opacity="0.88"/>
<rect x="663.8" y="249.5" width="8.7" height="11.6" fill="#5b6b75" fill-opacity="0.88"/>
<rect x="648.3" y="250.4" width="20.0" height="9.9" fill="none" stroke="#8c8838" stroke-width="1.0"/>
<rect x="641.7" y="247.4" width="33.4" height="16.1" fill="none" stroke="#9da1a1" stroke-width="1.1"/>
<rect x="686.9" y="250.6" width="33.9" height="8.7" fill="#5b6b75" fill-opacity="0.88"/>
<rect x="823.9" y="250.6" width="33.9" height="8.7" fill="#5b6b75" fill-opacity="0.88"/>
<rect x="686.9" y="273.2" width="33.9" height="8.7" fill="#5b6b75" fill-opacity="0.88"/>
<rect x="823.9" y="273.2" width="33.9" height="8.7" fill="#5b6b75" fill-opacity="0.88"/>
<rect x="686.9" y="296.1" width="33.9" height="8.7" fill="#5b6b75" fill-opacity="0.88"/>
<rect x="823.9" y="296.1" width="33.9" height="8.7" fill="#5b6b75" fill-opacity="0.88"/>
<rect x="674.5" y="298.3" width="5.0" height="5.0" fill="#7a1b26" fill-opacity="0.88"/>
<path d="M687 249.4 H730.8 V235.1 H813.5 V320.6 H730.8 V249.4" fill="none" stroke="#9da1a1" stroke-width="1.05"/>
<path d="M730.8 249.4 V305.8 M813.5 249.4 V305.8 M731 243.1 L738 236.1" stroke="#8c8838" stroke-width="1.1"/>
<rect x="644.3" y="342.5" width="8.8" height="11.6" fill="#5b6b75" fill-opacity="0.88"/>
<rect x="663.8" y="342.5" width="8.7" height="11.6" fill="#5b6b75" fill-opacity="0.88"/>
<rect x="648.3" y="343.4" width="20.0" height="9.9" fill="none" stroke="#8c8838" stroke-width="1.0"/>
<rect x="641.7" y="340.4" width="33.4" height="16.1" fill="none" stroke="#9da1a1" stroke-width="1.1"/>
<rect x="686.9" y="343.1" width="33.9" height="8.7" fill="#5b6b75" fill-opacity="0.88"/>
<rect x="823.9" y="343.1" width="33.9" height="8.7" fill="#5b6b75" fill-opacity="0.88"/>
<rect x="686.9" y="365.7" width="33.9" height="8.7" fill="#5b6b75" fill-opacity="0.88"/>
<rect x="823.9" y="365.7" width="33.9" height="8.7" fill="#5b6b75" fill-opacity="0.88"/>
<rect x="686.9" y="388.6" width="33.9" height="8.7" fill="#5b6b75" fill-opacity="0.88"/>
<rect x="823.9" y="388.6" width="33.9" height="8.7" fill="#5b6b75" fill-opacity="0.88"/>
<rect x="674.5" y="391.3" width="5.0" height="5.0" fill="#7a1b26" fill-opacity="0.88"/>
<rect x="633.0" y="346.0" width="5.0" height="5.0" fill="#7a1b26" fill-opacity="0.88"/>
<path d="M687 342.4 H730.8 V328.5 H813.5 V414.0 H730.8 V342.4" fill="none" stroke="#9da1a1" stroke-width="1.05"/>
<path d="M730.8 342.4 V398.8 M813.5 342.4 V398.8 M731 336.5 L738 329.5" stroke="#8c8838" stroke-width="1.1"/>
<rect x="644.3" y="434.5" width="8.8" height="11.6" fill="#5b6b75" fill-opacity="0.88"/>
<rect x="663.8" y="434.5" width="8.7" height="11.6" fill="#5b6b75" fill-opacity="0.88"/>
<rect x="648.3" y="435.4" width="20.0" height="9.9" fill="none" stroke="#8c8838" stroke-width="1.0"/>
<rect x="641.7" y="432.4" width="33.4" height="16.1" fill="none" stroke="#9da1a1" stroke-width="1.1"/>
<rect x="686.9" y="435.3" width="33.9" height="8.7" fill="#5b6b75" fill-opacity="0.88"/>
<rect x="823.9" y="435.3" width="33.9" height="8.7" fill="#5b6b75" fill-opacity="0.88"/>
<rect x="686.9" y="457.9" width="33.9" height="8.7" fill="#5b6b75" fill-opacity="0.88"/>
<rect x="823.9" y="457.9" width="33.9" height="8.7" fill="#5b6b75" fill-opacity="0.88"/>
<rect x="686.9" y="480.8" width="33.9" height="8.7" fill="#5b6b75" fill-opacity="0.88"/>
<rect x="823.9" y="480.8" width="33.9" height="8.7" fill="#5b6b75" fill-opacity="0.88"/>
<rect x="674.5" y="483.3" width="5.0" height="5.0" fill="#7a1b26" fill-opacity="0.88"/>
<rect x="633.0" y="438.0" width="5.0" height="5.0" fill="#7a1b26" fill-opacity="0.88"/>
<path d="M687 434.4 H730.8 V421.0 H813.5 V506.5 H730.8 V434.4" fill="none" stroke="#9da1a1" stroke-width="1.05"/>
<path d="M730.8 434.4 V490.8 M813.5 434.4 V490.8 M731 429.0 L738 422.0" stroke="#8c8838" stroke-width="1.1"/>
<rect x="644.3" y="526.5" width="8.8" height="11.6" fill="#5b6b75" fill-opacity="0.88"/>
<rect x="663.8" y="526.5" width="8.7" height="11.6" fill="#5b6b75" fill-opacity="0.88"/>
<rect x="648.3" y="527.4" width="20.0" height="9.9" fill="none" stroke="#8c8838" stroke-width="1.0"/>
<rect x="641.7" y="524.4" width="33.4" height="16.1" fill="none" stroke="#9da1a1" stroke-width="1.1"/>
<rect x="686.9" y="527.3" width="33.9" height="8.7" fill="#5b6b75" fill-opacity="0.88"/>
<rect x="823.9" y="527.3" width="33.9" height="8.7" fill="#5b6b75" fill-opacity="0.88"/>
<rect x="686.9" y="549.9" width="33.9" height="8.7" fill="#5b6b75" fill-opacity="0.88"/>
<rect x="823.9" y="549.9" width="33.9" height="8.7" fill="#5b6b75" fill-opacity="0.88"/>
<rect x="686.9" y="572.8" width="33.9" height="8.7" fill="#5b6b75" fill-opacity="0.88"/>
<rect x="823.9" y="572.8" width="33.9" height="8.7" fill="#5b6b75" fill-opacity="0.88"/>
<rect x="674.5" y="575.3" width="5.0" height="5.0" fill="#7a1b26" fill-opacity="0.88"/>
<rect x="633.0" y="530.0" width="5.0" height="5.0" fill="#7a1b26" fill-opacity="0.88"/>
<path d="M687 526.4 H730.8 V512.6 H813.5 V598.1 H730.8 V526.4" fill="none" stroke="#9da1a1" stroke-width="1.05"/>
<path d="M730.8 526.4 V582.8 M813.5 526.4 V582.8 M731 520.6 L738 513.6" stroke="#8c8838" stroke-width="1.1"/>
<rect x="644.3" y="617.5" width="8.8" height="11.6" fill="#5b6b75" fill-opacity="0.88"/>
<rect x="663.8" y="617.5" width="8.7" height="11.6" fill="#5b6b75" fill-opacity="0.88"/>
<rect x="648.3" y="618.4" width="20.0" height="9.9" fill="none" stroke="#8c8838" stroke-width="1.0"/>
<rect x="641.7" y="615.4" width="33.4" height="16.1" fill="none" stroke="#9da1a1" stroke-width="1.1"/>
<rect x="686.9" y="619.6" width="33.9" height="8.7" fill="#5b6b75" fill-opacity="0.88"/>
<rect x="823.9" y="619.6" width="33.9" height="8.7" fill="#5b6b75" fill-opacity="0.88"/>
<rect x="686.9" y="642.2" width="33.9" height="8.7" fill="#5b6b75" fill-opacity="0.88"/>
<rect x="823.9" y="642.2" width="33.9" height="8.7" fill="#5b6b75" fill-opacity="0.88"/>
<rect x="686.9" y="665.1" width="33.9" height="8.7" fill="#5b6b75" fill-opacity="0.88"/>
<rect x="823.9" y="665.1" width="33.9" height="8.7" fill="#5b6b75" fill-opacity="0.88"/>
<rect x="674.5" y="666.3" width="5.0" height="5.0" fill="#7a1b26" fill-opacity="0.88"/>
<rect x="633.0" y="621.0" width="5.0" height="5.0" fill="#7a1b26" fill-opacity="0.88"/>
<path d="M687 617.4 H730.8 V604.9 H813.5 V690.4 H730.8 V617.4" fill="none" stroke="#9da1a1" stroke-width="1.05"/>
<path d="M730.8 617.4 V673.8 M813.5 617.4 V673.8 M731 612.9 L738 605.9" stroke="#8c8838" stroke-width="1.1"/>
<path d="M902.6 402.8 H957.1 V424.6 H959 V431.5 H957.1 V460 H959 V503.8 H957.1 V526.4 H902.6 Z" fill="none" stroke="#9da1a1" stroke-width="1.2"/>
<path d="M902.6 452 H908.9 V476.4 H902.6" fill="none" stroke="#9da1a1" stroke-width="1.2"/>
<rect x="912.0" y="428.8" width="15.0" height="9.7" fill="#7a1b26" fill-opacity="0.88"/>
<rect x="932.8" y="429.1" width="14.6" height="9.3" rx="4.7" fill="#7a1b26" fill-opacity="0.88"/>
<rect x="912.1" y="444.3" width="14.6" height="9.3" rx="4.7" fill="#7a1b26" fill-opacity="0.88"/>
<rect x="932.8" y="444.3" width="14.6" height="9.3" rx="4.7" fill="#7a1b26" fill-opacity="0.88"/>
<rect x="912.1" y="459.6" width="14.6" height="9.3" rx="4.7" fill="#7a1b26" fill-opacity="0.88"/>
<rect x="932.8" y="459.6" width="14.6" height="9.3" rx="4.7" fill="#7a1b26" fill-opacity="0.88"/>
<rect x="912.1" y="474.8" width="14.6" height="9.3" rx="4.7" fill="#7a1b26" fill-opacity="0.88"/>
<rect x="932.8" y="474.8" width="14.6" height="9.3" rx="4.7" fill="#7a1b26" fill-opacity="0.88"/>
<rect x="912.1" y="490.1" width="14.6" height="9.3" rx="4.7" fill="#7a1b26" fill-opacity="0.88"/>
<rect x="932.8" y="490.1" width="14.6" height="9.3" rx="4.7" fill="#7a1b26" fill-opacity="0.88"/></g>
  <!-- crosshair -->
  <path d="M360 218 H420 M390 188 V248" stroke="#c4282b" stroke-width="2"/>
</svg>
<!-- scrollbars -->
<div class="abs" style="left:1283px;top:108px;width:14px;height:663px;background:#e9ecea"></div>
<div class="abs" style="left:1285px;top:385px;width:10px;height:333px;background:#bfcccb;border-radius:5px"></div>
<div class="abs" style="left:32px;top:772px;width:1251px;height:14px;background:#e9ecea"></div>
<div class="abs" style="left:421px;top:774px;width:825px;height:10px;background:#bfcccb;border-radius:5px"></div>
<svg class="abs" style="left:0;top:0" width="1304" height="792">
  <path d="M1284 117 L1289 111.5 L1294 117 Z" fill="#4f5a58"/>
  <path d="M1284 760 L1289 765.5 L1294 760 Z" fill="#4f5a58"/>
  <path d="M41 773 L35.5 778 L41 783 Z" fill="#4f5a58"/>
  <path d="M1271 773 L1276.5 778 L1271 783 Z" fill="#4f5a58"/>
  <circle cx="1290" cy="779" r="6.5" fill="#fff" stroke="#c3cfce" stroke-width="1"/>
</svg>
<!-- floating toolbar -->
<div id="tb"><svg class="abs" style="left:0;top:0" width="1304" height="200"><rect x="453" y="133" width="409" height="41" rx="7" fill="#fff"/><rect x="459.5" y="136.5" width="34" height="34" rx="6" fill="#b9dcdb"/><rect x="529.5" y="136.5" width="34" height="34" rx="6" fill="#b9dcdb"/><rect x="564.5" y="136.5" width="34" height="34" rx="6" fill="#b9dcdb"/><rect x="599.5" y="136.5" width="34" height="34" rx="6" fill="#b9dcdb"/><rect x="634.5" y="136.5" width="34" height="34" rx="6" fill="#b9dcdb"/><rect x="669.5" y="136.5" width="34" height="34" rx="6" fill="#b9dcdb"/><path d="M471 144.8 L471 160.8 L475.2 157 L478.3 163.2 L481.8 161.4 L478.8 155.7 L483.9 155 Z" fill="#fff" stroke="#3d4443" stroke-width="1.3" stroke-linejoin="round"/><text x="512.5" y="151" text-anchor="middle" font-size="9.5" fill="#9aa5a4">DC</text><path d="M507.5 153.5 H518 L514 158.5 V163 L512 161.5 V158.5 Z" fill="none" stroke="#9aa5a4" stroke-width="1.1" stroke-linejoin="round"/><path d="M550 158.5 A6.3 6.3 0 1 1 552.3 154.5" fill="none" stroke="#c0292c" stroke-width="1.4"/><circle cx="546.2" cy="153" r="2.9" fill="#c0292c"/><path d="M538.5 145.2 L540.5 147.2 M553.8 145.2 L551.8 147.2 M538.5 160.8 L540.5 158.8" stroke="#4a4f4e" stroke-width="1"/><path d="M544.4 160.6 C546.9 156.2 553.5 156.2 556.0 160.6 C553.5 165.0 546.9 165.0 544.4 160.6 Z" fill="#b9dcdb" stroke="#4a4f4e" stroke-width="1.4" stroke-linejoin="round"/><circle cx="550.2" cy="160.6" r="2.3" fill="#4a4f4e"/><circle cx="549.3" cy="159.7" r="0.7" fill="#b9dcdb"/><path d="M575 163 V157 L582 150 V144 M577.5 163.5 V158 L584.5 151 V143.5 M580 162 V159 L587 152 V145" fill="none" stroke="#c0292c" stroke-width="1.2"/><path d="M579.5 160.6 C582.0 156.2 588.6 156.2 591.1 160.6 C588.6 165.0 582.0 165.0 579.5 160.6 Z" fill="#b9dcdb" stroke="#4a4f4e" stroke-width="1.4" stroke-linejoin="round"/><circle cx="585.3" cy="160.6" r="2.3" fill="#4a4f4e"/><circle cx="584.4" cy="159.7" r="0.7" fill="#b9dcdb"/><path d="M611.8 161.2 L607.4 151.4 L616.5 144.6 L625.4 151.4 L623.5 156" fill="none" stroke="#3d5bd3" stroke-width="1.2" stroke-linejoin="round"/><path d="M614.6 160.6 C617.1 156.2 623.7 156.2 626.2 160.6 C623.7 165.0 617.1 165.0 614.6 160.6 Z" fill="#b9dcdb" stroke="#4a4f4e" stroke-width="1.4" stroke-linejoin="round"/><circle cx="620.4" cy="160.6" r="2.3" fill="#4a4f4e"/><circle cx="619.5" cy="159.7" r="0.7" fill="#b9dcdb"/><path d="M648 159 A6 6 0 1 1 658 155.5" fill="none" stroke="#3d5bd3" stroke-width="1.2"/><path d="M643 153.2 H662 M652.5 144 V157" stroke="#3d5bd3" stroke-width="1.2"/><path d="M649.6 160.6 C652.1 156.2 658.7 156.2 661.2 160.6 C658.7 165.0 652.1 165.0 649.6 160.6 Z" fill="#b9dcdb" stroke="#4a4f4e" stroke-width="1.4" stroke-linejoin="round"/><circle cx="655.4" cy="160.6" r="2.3" fill="#4a4f4e"/><circle cx="654.5" cy="159.7" r="0.7" fill="#b9dcdb"/><path d="M680.3 146.5 H692.8 V159.5 H680.3 Z" fill="#b4cfe8" stroke="#3d5bd3" stroke-width="1.2"/><g fill="#fff" stroke="#3d5bd3" stroke-width="1"><circle cx="680.3" cy="146.5" r="1.6"/><circle cx="692.8" cy="146.5" r="1.6"/><circle cx="680.3" cy="159.5" r="1.6"/></g><path d="M684.5 160.6 C687.0 156.2 693.6 156.2 696.1 160.6 C693.6 165.0 687.0 165.0 684.5 160.6 Z" fill="#b9dcdb" stroke="#4a4f4e" stroke-width="1.4" stroke-linejoin="round"/><circle cx="690.3" cy="160.6" r="2.3" fill="#4a4f4e"/><circle cx="689.4" cy="159.7" r="0.7" fill="#b9dcdb"/><path d="M715 146.5 L718 149.5 M729.5 146.5 L726.5 149.5 M715 160.5 L718 157.5 M729.5 160.5 L726.5 157.5" stroke="#3d5bd3" stroke-width="3" stroke-linecap="round"/><path d="M715 146.5 L718 149.5 M729.5 146.5 L726.5 149.5 M715 160.5 L718 157.5 M729.5 160.5 L726.5 157.5" stroke="#fff" stroke-width="1" stroke-linecap="round"/><circle cx="722.2" cy="153.5" r="6.6" fill="#fff" stroke="#3d5bd3" stroke-width="1"/><circle cx="722.2" cy="153.5" r="4.2" fill="none" stroke="#c0292c" stroke-width="2.8"/><rect x="744" y="142" width="2" height="23" fill="#bfcccb"/><circle cx="768.8" cy="153.7" r="9.5" fill="none" stroke="#3d5bd3" stroke-width="1.2"/><path d="M772.95 154.81 L765.25 162.51 M769.91 157.85 L759.39 155.04 M765.76 156.74 L762.94 146.22 M764.65 152.59 L772.35 144.89 M767.69 149.55 L778.21 152.36 M771.84 150.66 L774.66 161.18" stroke="#3d5bd3" stroke-width="1.1" fill="none"/><circle cx="800.2" cy="153.8" r="3.2" fill="none" stroke="#a9b5b4" stroke-width="1.2"/><path d="M806.5 145 V161 Q809 163.5 811.3 161 V145" fill="none" stroke="#a9b5b4" stroke-width="1.2"/><path d="M806.5 151 L811.3 148.5 M806.5 155 L811.3 152.5 M806.5 159 L811.3 156.5" stroke="#a9b5b4" stroke-width="1"/><rect x="830.5" y="144.5" width="18" height="18" fill="none" stroke="#555c5b" stroke-width="1" stroke-dasharray="1 1.4"/><path d="M839.5 145 V162 M831 153.5 H848" stroke="#555c5b" stroke-width="1" stroke-dasharray="1 1.6"/><path d="M830.5 162.8 L848.8 144.2" stroke="#3d5bd3" stroke-width="1.3"/></svg></div>
</div>
</body></html>
